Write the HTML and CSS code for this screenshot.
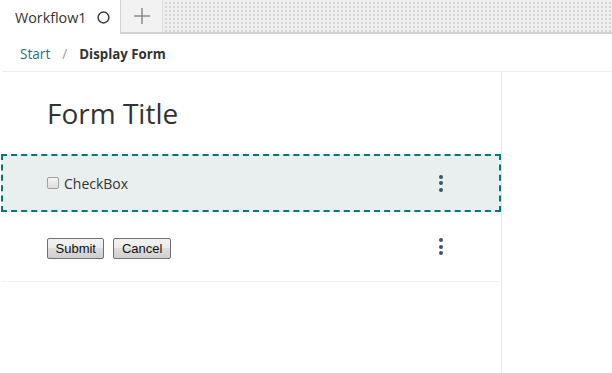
FILE: index.html
```html
<!DOCTYPE html>
<html lang="en">
<head>
  <meta charset="UTF-8" />
  <meta name="viewport" content="width=device-width, initial-scale=1.0"/>
  <title>Workflow1 - Display Form</title>
  <link rel="stylesheet" href="styles.css">
</head>
<body>
  <div class="tabbar">
    <div class="tab active">
      <span class="tab-name">Workflow1</span>
      <svg class="tab-status" width="13" height="13" viewBox="0 0 13 13">
        <circle cx="6.5" cy="6.5" r="5.4" fill="none" stroke="#3a3a3a" stroke-width="1.5"/>
      </svg>
    </div>
    <div class="tab-add">
      <svg width="18" height="18" viewBox="0 0 18 18">
        <path d="M9 1v16M1 9h16" stroke="#8a8a8a" stroke-width="1.5"/>
      </svg>
    </div>
    <div class="tab-fill"></div>
  </div>

  <div class="crumbs">
    <a class="crumb-link" href="#">Start</a>
    <span class="crumb-sep">/</span>
    <span class="crumb-current">Display Form</span>
  </div>

  <div class="main">
    <div class="form-col">
      <h1 class="form-title">Form Title</h1>

      <div class="form-row selected">
        <label class="check">
          <input type="checkbox">
          <span>CheckBox</span>
        </label>
        <div class="kebab"><i></i><i></i><i></i></div>
      </div>

      <div class="form-row actions">
        <div class="buttons">
          <button>Submit</button>
          <button>Cancel</button>
        </div>
        <div class="kebab"><i></i><i></i><i></i></div>
      </div>
    </div>
    <div class="side-col"></div>
  </div>
</body>
</html>
```

FILE: styles.css
```css
body {
  margin: 0;
  font-family: 'Open Sans', 'Noto Sans', sans-serif;
  font-size: 14px;
  color: #333;
  background-color: #fff;
  height: 373px;
  display: flex;
  flex-direction: column;
  overflow: hidden;
}

/* tabs */
.tabbar {
  display: flex;
  height: 34px;
  flex-shrink: 0;
}

.tab {
  width: 120px;
  display: flex;
  align-items: center;
  padding-left: 15px;
  box-sizing: border-box;
  background-color: #fff;
}

.tab-name {
  color: #333;
  font-size: 14.3px;
}

.tab-status {
  margin-left: 11px;
}

.tab-add {
  width: 43px;
  display: flex;
  align-items: center;
  justify-content: center;
  background-color: #f2f2f2;
  border-left: 1px solid #d4d4d4;
  border-right: 1px solid #dcdcdc;
  border-bottom: 2px solid #d2d2d2;
  box-sizing: border-box;
}

.tab-fill {
  flex: 1;
  background-color: #efefef;
  background-image: radial-gradient(circle, #d6d6d6 0.8px, transparent 1px);
  background-size: 4px 4px;
  background-position: 1px 1px;
  border-bottom: 2px solid #d2d2d2;
}

/* breadcrumb */
.crumbs {
  height: 38px;
  display: flex;
  align-items: center;
  border-bottom: 1px solid #ececec;
  margin-left: 2px;
  padding: 2px 0 0 18px;
  box-sizing: border-box;
  font-size: 13.6px;
  flex-shrink: 0;
}

.crumb-link {
  color: #1f6f86;
  text-decoration: none;
}

.crumb-sep {
  color: #999;
  margin: 0 12px;
}

.crumb-current {
  font-weight: bold;
  color: #333;
  font-size: 13.3px;
}

/* form */
.main {
  flex: 1;
  display: flex;
}

.form-col {
  width: 501px;
  border-right: 1px solid #e6e6e6;
}

.side-col {
  flex: 1;
}

.form-title {
  margin: 22px 0 22px 47px;
  font-size: 28px;
  font-weight: normal;
  line-height: 38px;
  color: #333;
}

.form-row {
  display: flex;
  align-items: center;
  justify-content: space-between;
  padding: 0 56px 0 44px;
}

.form-row.selected {
  height: 58px;
  box-sizing: border-box;
  margin-left: 1px;
  border: 2px dashed #00787a;
  background-color: #e9efef;
}

.form-row.actions {
  height: 69px;
  margin: 0 2px;
  padding: 0 56px 0 45px;
  border-bottom: 1px solid #f1f1f1;
}

.check {
  display: flex;
  align-items: center;
  color: #333;
}

.check input {
  appearance: none;
  width: 12px;
  height: 12px;
  margin: 0 5px 0 0;
  border: 1px solid #a0a0a0;
  border-radius: 2px;
  background: linear-gradient(#f4f4f4, #dedede);
}

.buttons {
  display: flex;
  gap: 9px;
  margin-top: 3px;
}

button {
  font-family: 'Liberation Sans', Arial, sans-serif;
  font-size: 13px;
  height: 21px;
  padding: 0 7.5px;
  color: #111;
  border: 1px solid #707070;
  border-radius: 2px;
  background: linear-gradient(#f2f2f2, #ebebeb 50%, #dddddd 50%, #cfcfcf);
}

.kebab {
  display: flex;
  flex-direction: column;
  gap: 2.5px;
}

.kebab i {
  display: block;
  width: 4px;
  height: 4px;
  border-radius: 50%;
  background-color: #3a5665;
}
```
